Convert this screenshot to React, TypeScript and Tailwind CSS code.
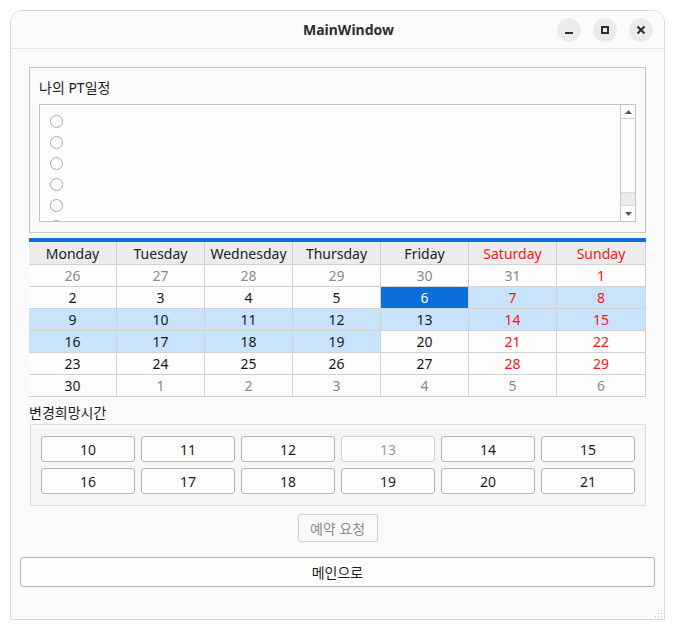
import { useState } from "react";

type Day = { d: number; tone?: "muted" | "red"; hl?: boolean; sel?: boolean };

const headers = ["Monday", "Tuesday", "Wednesday", "Thursday", "Friday", "Saturday", "Sunday"];

const weeks: Day[][] = [
  [
    { d: 26, tone: "muted" },
    { d: 27, tone: "muted" },
    { d: 28, tone: "muted" },
    { d: 29, tone: "muted" },
    { d: 30, tone: "muted" },
    { d: 31, tone: "muted" },
    { d: 1, tone: "red" },
  ],
  [
    { d: 2 },
    { d: 3 },
    { d: 4 },
    { d: 5 },
    { d: 6, sel: true },
    { d: 7, tone: "red", hl: true },
    { d: 8, tone: "red", hl: true },
  ],
  [
    { d: 9, hl: true },
    { d: 10, hl: true },
    { d: 11, hl: true },
    { d: 12, hl: true },
    { d: 13, hl: true },
    { d: 14, tone: "red", hl: true },
    { d: 15, tone: "red", hl: true },
  ],
  [
    { d: 16, hl: true },
    { d: 17, hl: true },
    { d: 18, hl: true },
    { d: 19, hl: true },
    { d: 20 },
    { d: 21, tone: "red" },
    { d: 22, tone: "red" },
  ],
  [
    { d: 23 },
    { d: 24 },
    { d: 25 },
    { d: 26 },
    { d: 27 },
    { d: 28, tone: "red" },
    { d: 29, tone: "red" },
  ],
  [
    { d: 30 },
    { d: 1, tone: "muted" },
    { d: 2, tone: "muted" },
    { d: 3, tone: "muted" },
    { d: 4, tone: "muted" },
    { d: 5, tone: "muted" },
    { d: 6, tone: "muted" },
  ],
];

const hours = [10, 11, 12, 13, 14, 15, 16, 17, 18, 19, 20, 21];

function TitleButton({ kind }: { kind: "min" | "max" | "close" }) {
  return (
    <div className="flex h-[24px] w-[24px] items-center justify-center rounded-full bg-[#ebebeb]">
      {kind === "min" && <div className="mt-[6px] h-[2px] w-[8px] bg-[#2e2e2e]" />}
      {kind === "max" && <div className="h-[8px] w-[8px] border-2 border-[#2e2e2e]" />}
      {kind === "close" && (
        <svg width="10" height="10" viewBox="0 0 10 10">
          <path d="M1.5 1.5 L8.5 8.5 M8.5 1.5 L1.5 8.5" stroke="#2e2e2e" strokeWidth="2" />
        </svg>
      )}
    </div>
  );
}

function Radio() {
  return <div className="h-[13px] w-[13px] shrink-0 rounded-full border border-[#a8a8a8] bg-[#fdfdfd]" />;
}

export default function App() {
  const [picked, setPicked] = useState<number | null>(null);

  return (
    <div className="h-[630px] w-[675px] bg-white pl-[10px] pt-[10px] font-['Noto_Sans','Noto_Sans_CJK_KR',sans-serif] text-[#1e1e1e]">
      <div className="flex h-[610px] w-[655px] flex-col overflow-hidden rounded-t-[12px] border border-[#d9d9d9] bg-[#fafafa]">
        {/* title bar */}
        <div className="relative flex h-[38px] shrink-0 items-center justify-center border-b border-[#e6e6e6] bg-[#fbfbfb] pl-[22px]">
          <span className="text-[14px] font-bold text-[#2e2e2e]">MainWindow</span>
          <div className="absolute right-[11px] top-[7px] flex gap-[12px]">
            <TitleButton kind="min" />
            <TitleButton kind="max" />
            <TitleButton kind="close" />
          </div>
        </div>

        <div className="relative flex flex-1 flex-col px-[9px] pt-[18px]">
          {/* my schedule group */}
          <div className="mx-[9px] flex h-[166px] w-[617px] flex-col border border-[#c6c6c6] px-[9px]">
            <div className="mt-[11px] h-[18px] text-[14px] leading-[18px]">나의 PT일정</div>
            <div className="mt-[7px] flex h-[118px] border border-[#c2c2c2] bg-[#fdfdfd]">
              <div className="flex flex-1 flex-col gap-[8px] overflow-hidden pl-[10px] pt-[10px]">
                {[0, 1, 2, 3, 4, 5].map((i) => (
                  <Radio key={i} />
                ))}
              </div>
              <div className="flex w-[15px] flex-col border-l border-[#c8c8c8] bg-[#fdfdfd]">
                <div className="flex h-[14px] items-center justify-center border-b border-[#cfcfcf]">
                  <svg width="7" height="4" viewBox="0 0 7 4">
                    <path d="M0 4 L3.5 0 L7 4 Z" fill="#555" />
                  </svg>
                </div>
                <div className="flex-1" />
                <div className="h-[14px] border-y border-[#dcdcdc] bg-[#ececec]" />
                <div className="flex h-[15px] items-center justify-center">
                  <svg width="7" height="4" viewBox="0 0 7 4">
                    <path d="M0 0 L7 0 L3.5 4 Z" fill="#555" />
                  </svg>
                </div>
              </div>
            </div>
          </div>

          {/* calendar */}
          <div className="mx-[9px] mt-[5px] w-[617px] text-[14px]">
            <div className="h-[4px] bg-[#0a6fdc]" />
            <div className="grid grid-cols-[repeat(6,88px)_89px] bg-[#ececec]">
              {headers.map((h, i) => (
                <div
                  key={h}
                  className={`flex h-[23px] items-center justify-center border-b border-r border-[#d2d2d2] ${
                    i >= 5 ? "text-[#f21818]" : "text-[#222]"
                  }`}
                >
                  {h}
                </div>
              ))}
            </div>
            <div className="grid grid-cols-[repeat(6,88px)_89px] bg-[#fdfdfd]">
              {weeks.flat().map((c, i) => {
                const color = c.sel
                  ? "text-white"
                  : c.tone === "muted"
                    ? "text-[#8a8a8a]"
                    : c.tone === "red"
                      ? "text-[#f21818]"
                      : "text-[#1a1a1a]";
                const bg = c.sel ? "bg-[#0a6fdc]" : c.hl ? "bg-[#c8e3fb]" : "";
                return (
                  <div
                    key={i}
                    className={`flex h-[22px] items-center justify-center border-b border-r border-[#d2d2d2] ${color} ${bg}`}
                  >
                    {c.d}
                  </div>
                );
              })}
            </div>
          </div>

          {/* preferred time */}
          <div className="mx-[9px] mt-[8px] h-[16px] text-[14px] leading-[16px]">변경희망시간</div>
          <div className="ml-[10px] mt-[3px] w-[616px] border border-[#dedede] bg-[#f6f6f6] pb-[11px] pl-[10px] pt-[11px]">
            <div className="grid grid-cols-[repeat(6,94px)] gap-x-[6px] gap-y-[6px]">
              {hours.map((h) => {
                const disabled = h === 13;
                return (
                  <button
                    key={h}
                    disabled={disabled}
                    onClick={() => setPicked(h)}
                    className={`flex h-[26px] items-center justify-center rounded-[3px] border bg-[#fdfdfd] text-[14px] ${
                      disabled ? "border-[#d4d4d4] text-[#9a9a9a]" : "border-[#b4b4b4] text-[#1e1e1e]"
                    } ${picked === h ? "bg-[#e8f1fb]" : ""}`}
                  >
                    {h}
                  </button>
                );
              })}
            </div>
          </div>

          <div className="mt-[8px] flex justify-center">
            <button className="flex h-[28px] w-[80px] items-center justify-center rounded-[3px] border border-[#d0d0d0] bg-[#fafafa] text-[14px] text-[#8c8c8c]">
              예약 요청
            </button>
          </div>

          <button className="mt-[15px] flex h-[30px] w-[635px] items-center justify-center rounded-[3px] border border-[#b4b4b4] bg-[#fdfdfd] text-[14px] text-[#1e1e1e]">
            메인으로
          </button>

          {/* resize grip */}
          <div className="absolute bottom-[2px] right-[2px] grid grid-cols-3 gap-[2px]">
            {[0, 1, 2, 3, 4, 5, 6, 7, 8].map((i) => (
              <div
                key={i}
                className={`h-[1px] w-[1px] ${i === 2 || i === 4 || i === 5 || i >= 6 ? "bg-[#bdbdbd]" : ""}`}
              />
            ))}
          </div>
        </div>
      </div>
    </div>
  );
}
